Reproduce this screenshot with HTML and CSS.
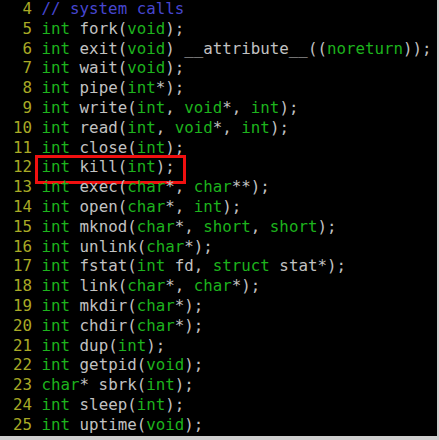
FILE: index.html
```html
<!DOCTYPE html>
<html>
<head>
<meta charset="utf-8">
<link rel="stylesheet" href="styles.css">
</head>
<body>
<div class="term">
<div class="code">
<div class="ln"><span class="n"> 4</span> <span class="c">// system calls</span></div>
<div class="ln"><span class="n"> 5</span> <span class="k">int</span> fork(<span class="k">void</span>);</div>
<div class="ln"><span class="n"> 6</span> <span class="k">int</span> exit(<span class="k">void</span>) __attribute__((<span class="k">noreturn</span>));</div>
<div class="ln"><span class="n"> 7</span> <span class="k">int</span> wait(<span class="k">void</span>);</div>
<div class="ln"><span class="n"> 8</span> <span class="k">int</span> pipe(<span class="k">int</span>*);</div>
<div class="ln"><span class="n"> 9</span> <span class="k">int</span> write(<span class="k">int</span>, <span class="k">void</span>*, <span class="k">int</span>);</div>
<div class="ln"><span class="n">10</span> <span class="k">int</span> read(<span class="k">int</span>, <span class="k">void</span>*, <span class="k">int</span>);</div>
<div class="ln"><span class="n">11</span> <span class="k">int</span> close(<span class="k">int</span>);</div>
<div class="ln hl"><span class="n">12</span> <span class="k">int</span> kill(<span class="k">int</span>);<span class="box"></span></div>
<div class="ln"><span class="n">13</span> <span class="k">int</span> exec(<span class="k">char</span>*, <span class="k">char</span>**);</div>
<div class="ln"><span class="n">14</span> <span class="k">int</span> open(<span class="k">char</span>*, <span class="k">int</span>);</div>
<div class="ln"><span class="n">15</span> <span class="k">int</span> mknod(<span class="k">char</span>*, <span class="k">short</span>, <span class="k">short</span>);</div>
<div class="ln"><span class="n">16</span> <span class="k">int</span> unlink(<span class="k">char</span>*);</div>
<div class="ln"><span class="n">17</span> <span class="k">int</span> fstat(<span class="k">int</span> fd, <span class="k">struct</span> stat*);</div>
<div class="ln"><span class="n">18</span> <span class="k">int</span> link(<span class="k">char</span>*, <span class="k">char</span>*);</div>
<div class="ln"><span class="n">19</span> <span class="k">int</span> mkdir(<span class="k">char</span>*);</div>
<div class="ln"><span class="n">20</span> <span class="k">int</span> chdir(<span class="k">char</span>*);</div>
<div class="ln"><span class="n">21</span> <span class="k">int</span> dup(<span class="k">int</span>);</div>
<div class="ln"><span class="n">22</span> <span class="k">int</span> getpid(<span class="k">void</span>);</div>
<div class="ln"><span class="n">23</span> <span class="k">char</span>* sbrk(<span class="k">int</span>);</div>
<div class="ln"><span class="n">24</span> <span class="k">int</span> sleep(<span class="k">int</span>);</div>
<div class="ln"><span class="n">25</span> <span class="k">int</span> uptime(<span class="k">void</span>);</div>
</div>
</div>
</body>
</html>
```
FILE: styles.css
```css
html, body {
  margin: 0;
  padding: 0;
  background: #cfcfcf;
}
.term {
  width: 437px;
  height: 436px;
  background: #000;
  overflow: hidden;
}
.code {
  padding: 0 0 0 13px;
  font-family: "DejaVu Sans Mono", monospace;
  font-size: 15.8px;
  line-height: 18.4px;
  color: #c2c2c2;
}
.ln {
  position: relative;
  height: 19.8px;
  white-space: pre;
}
.n { color: #a9a925; }
.k { color: #1db31d; }
.c { color: #4646cf; }
.box {
  position: absolute;
  left: 22px;
  top: -3.4px;
  width: 145px;
  height: 23px;
  border: 3px solid #f01010;
}
```
